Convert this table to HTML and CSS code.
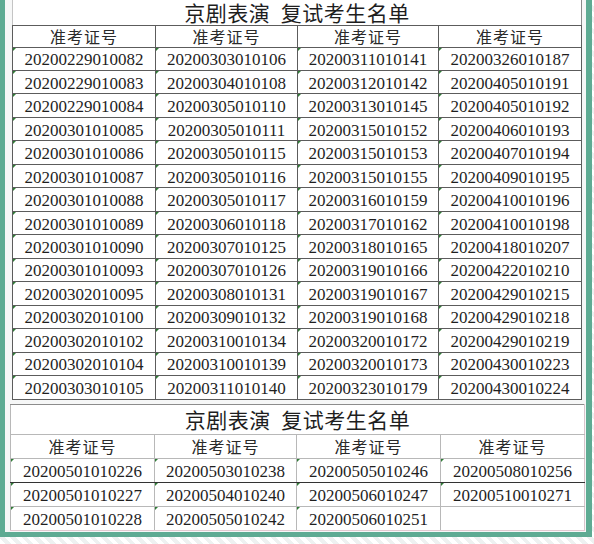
FILE: index.html
```html
<!DOCTYPE html>
<html lang="zh">
<head>
<meta charset="utf-8">
<title>京剧表演 复试考生名单</title>
<link rel="stylesheet" href="styles.css">
</head>
<body>
<div class="frame">
  <table class="sheet sheet-top">
    <colgroup><col class="c1"><col class="c2"><col class="c3"><col class="c4"></colgroup>
    <tr class="title-row"><td colspan="4" class="title">京剧表演&nbsp;&nbsp;复试考生名单</td></tr>
    <tr class="head-row"><td class="head">准考证号</td><td class="head">准考证号</td><td class="head">准考证号</td><td class="head">准考证号</td></tr>
    <tr><td class="num">20200229010082</td><td class="num">20200303010106</td><td class="num">20200311010141</td><td class="num">20200326010187</td></tr>
    <tr><td class="num">20200229010083</td><td class="num">20200304010108</td><td class="num">20200312010142</td><td class="num">20200405010191</td></tr>
    <tr><td class="num">20200229010084</td><td class="num">20200305010110</td><td class="num">20200313010145</td><td class="num">20200405010192</td></tr>
    <tr><td class="num">20200301010085</td><td class="num">20200305010111</td><td class="num">20200315010152</td><td class="num">20200406010193</td></tr>
    <tr><td class="num">20200301010086</td><td class="num">20200305010115</td><td class="num">20200315010153</td><td class="num">20200407010194</td></tr>
    <tr><td class="num">20200301010087</td><td class="num">20200305010116</td><td class="num">20200315010155</td><td class="num">20200409010195</td></tr>
    <tr><td class="num">20200301010088</td><td class="num">20200305010117</td><td class="num">20200316010159</td><td class="num">20200410010196</td></tr>
    <tr><td class="num">20200301010089</td><td class="num">20200306010118</td><td class="num">20200317010162</td><td class="num">20200410010198</td></tr>
    <tr><td class="num">20200301010090</td><td class="num">20200307010125</td><td class="num">20200318010165</td><td class="num">20200418010207</td></tr>
    <tr><td class="num">20200301010093</td><td class="num">20200307010126</td><td class="num">20200319010166</td><td class="num">20200422010210</td></tr>
    <tr><td class="num">20200302010095</td><td class="num">20200308010131</td><td class="num">20200319010167</td><td class="num">20200429010215</td></tr>
    <tr><td class="num">20200302010100</td><td class="num">20200309010132</td><td class="num">20200319010168</td><td class="num">20200429010218</td></tr>
    <tr><td class="num">20200302010102</td><td class="num">20200310010134</td><td class="num">20200320010172</td><td class="num">20200429010219</td></tr>
    <tr><td class="num">20200302010104</td><td class="num">20200310010139</td><td class="num">20200320010173</td><td class="num">20200430010223</td></tr>
    <tr><td class="num">20200303010105</td><td class="num">20200311010140</td><td class="num">20200323010179</td><td class="num">20200430010224</td></tr>
  </table>

  <table class="sheet sheet-bottom">
    <colgroup><col class="d1"><col class="d2"><col class="d3"><col class="d4"></colgroup>
    <tr class="title-row"><td colspan="4" class="title">京剧表演&nbsp;&nbsp;复试考生名单</td></tr>
    <tr class="head-row"><td class="head">准考证号</td><td class="head">准考证号</td><td class="head">准考证号</td><td class="head">准考证号</td></tr>
    <tr class="dark-below"><td class="num">20200501010226</td><td class="num">20200503010238</td><td class="num">20200505010246</td><td class="num">20200508010256</td></tr>
    <tr><td class="num">20200501010227</td><td class="num">20200504010240</td><td class="num">20200506010247</td><td class="num">20200510010271</td></tr>
    <tr><td class="num">20200501010228</td><td class="num">20200505010242</td><td class="num">20200506010251</td><td class="empty"></td></tr>
  </table>
</div>
</body>
</html>
```

FILE: styles.css
```css
html, body {
  margin: 0;
  padding: 0;
}

body {
  width: 594px;
  height: 544px;
  overflow: hidden;
  background: repeating-linear-gradient(45deg, #ffffff 0 4px, #eef1f1 4px 8px);
  font-family: "Liberation Serif", "Noto Sans CJK SC", serif;
  color: #222;
}

.frame {
  width: 581px;
  height: 532px;
  border-left: 5px solid #5eab93;
  border-right: 6px solid #5eab93;
  border-bottom: 5px solid #5eab93;
  background: #f6f7f7;
  display: flex;
  flex-direction: column;
  overflow: hidden;
}

.sheet {
  border-collapse: collapse;
  table-layout: fixed;
  background: #fff;
  flex: none;
}

.sheet td {
  padding: 0;
  text-align: center;
  vertical-align: middle;
  white-space: nowrap;
  overflow: hidden;
  line-height: 1;
}

.sheet-top {
  width: 569px;
  margin-left: 7px;
}

.sheet-top .c1 { width: 143px; }
.sheet-top .c2 { width: 142px; }
.sheet-top .c3 { width: 141px; }
.sheet-top .c4 { width: 143px; }

.sheet-top td {
  border: 1px solid #5c5c5c;
}

.sheet-top tr { height: 23.47px; }
.sheet-top .title-row { height: 25px; }
.sheet-top .head-row { height: 22px; }
.sheet-top .title {
  border-top: none;
  border-left-color: #c4c4c4;
  border-right-color: #8a8a8a;
}

.sheet-bottom {
  width: 574px;
  margin-left: 5px;
  margin-top: 4px;
}

.sheet-bottom .d1 { width: 144px; }
.sheet-bottom .d2 { width: 142px; }
.sheet-bottom .d3 { width: 144px; }
.sheet-bottom .d4 { width: 144px; }

.sheet-bottom td {
  border: 1px solid #b8b8b8;
}

.sheet-bottom tr { height: 24px; }
.sheet-bottom .title-row { height: 30px; }
.sheet-bottom .head-row { height: 24px; }
.sheet-bottom .title { border-top-color: #8c8c8c; }
.sheet-bottom .dark-below td { border-bottom-color: #333; }
.sheet-bottom tr:last-child td { border-bottom-color: #e2c8d0; }
.sheet-bottom td:last-child { border-right-color: #d9c4cc; }

.title {
  font-family: "Noto Sans CJK SC", sans-serif;
  font-size: 21px;
  font-weight: 400;
  letter-spacing: 0.5px;
  color: #1e1e1e;
}

.head {
  font-family: "Noto Sans CJK SC", sans-serif;
  font-size: 16px;
  letter-spacing: 1px;
  color: #2a2a2a;
}

.num {
  position: relative;
  font-size: 17px;
  color: #1f1f1f;
  padding-top: 2px;
}

.sheet td.num { padding-top: 2px; }

.num::before {
  content: "";
  position: absolute;
  left: 0;
  top: 0;
  border-top: 3px solid #2f7a36;
  border-right: 3px solid transparent;
}
```
